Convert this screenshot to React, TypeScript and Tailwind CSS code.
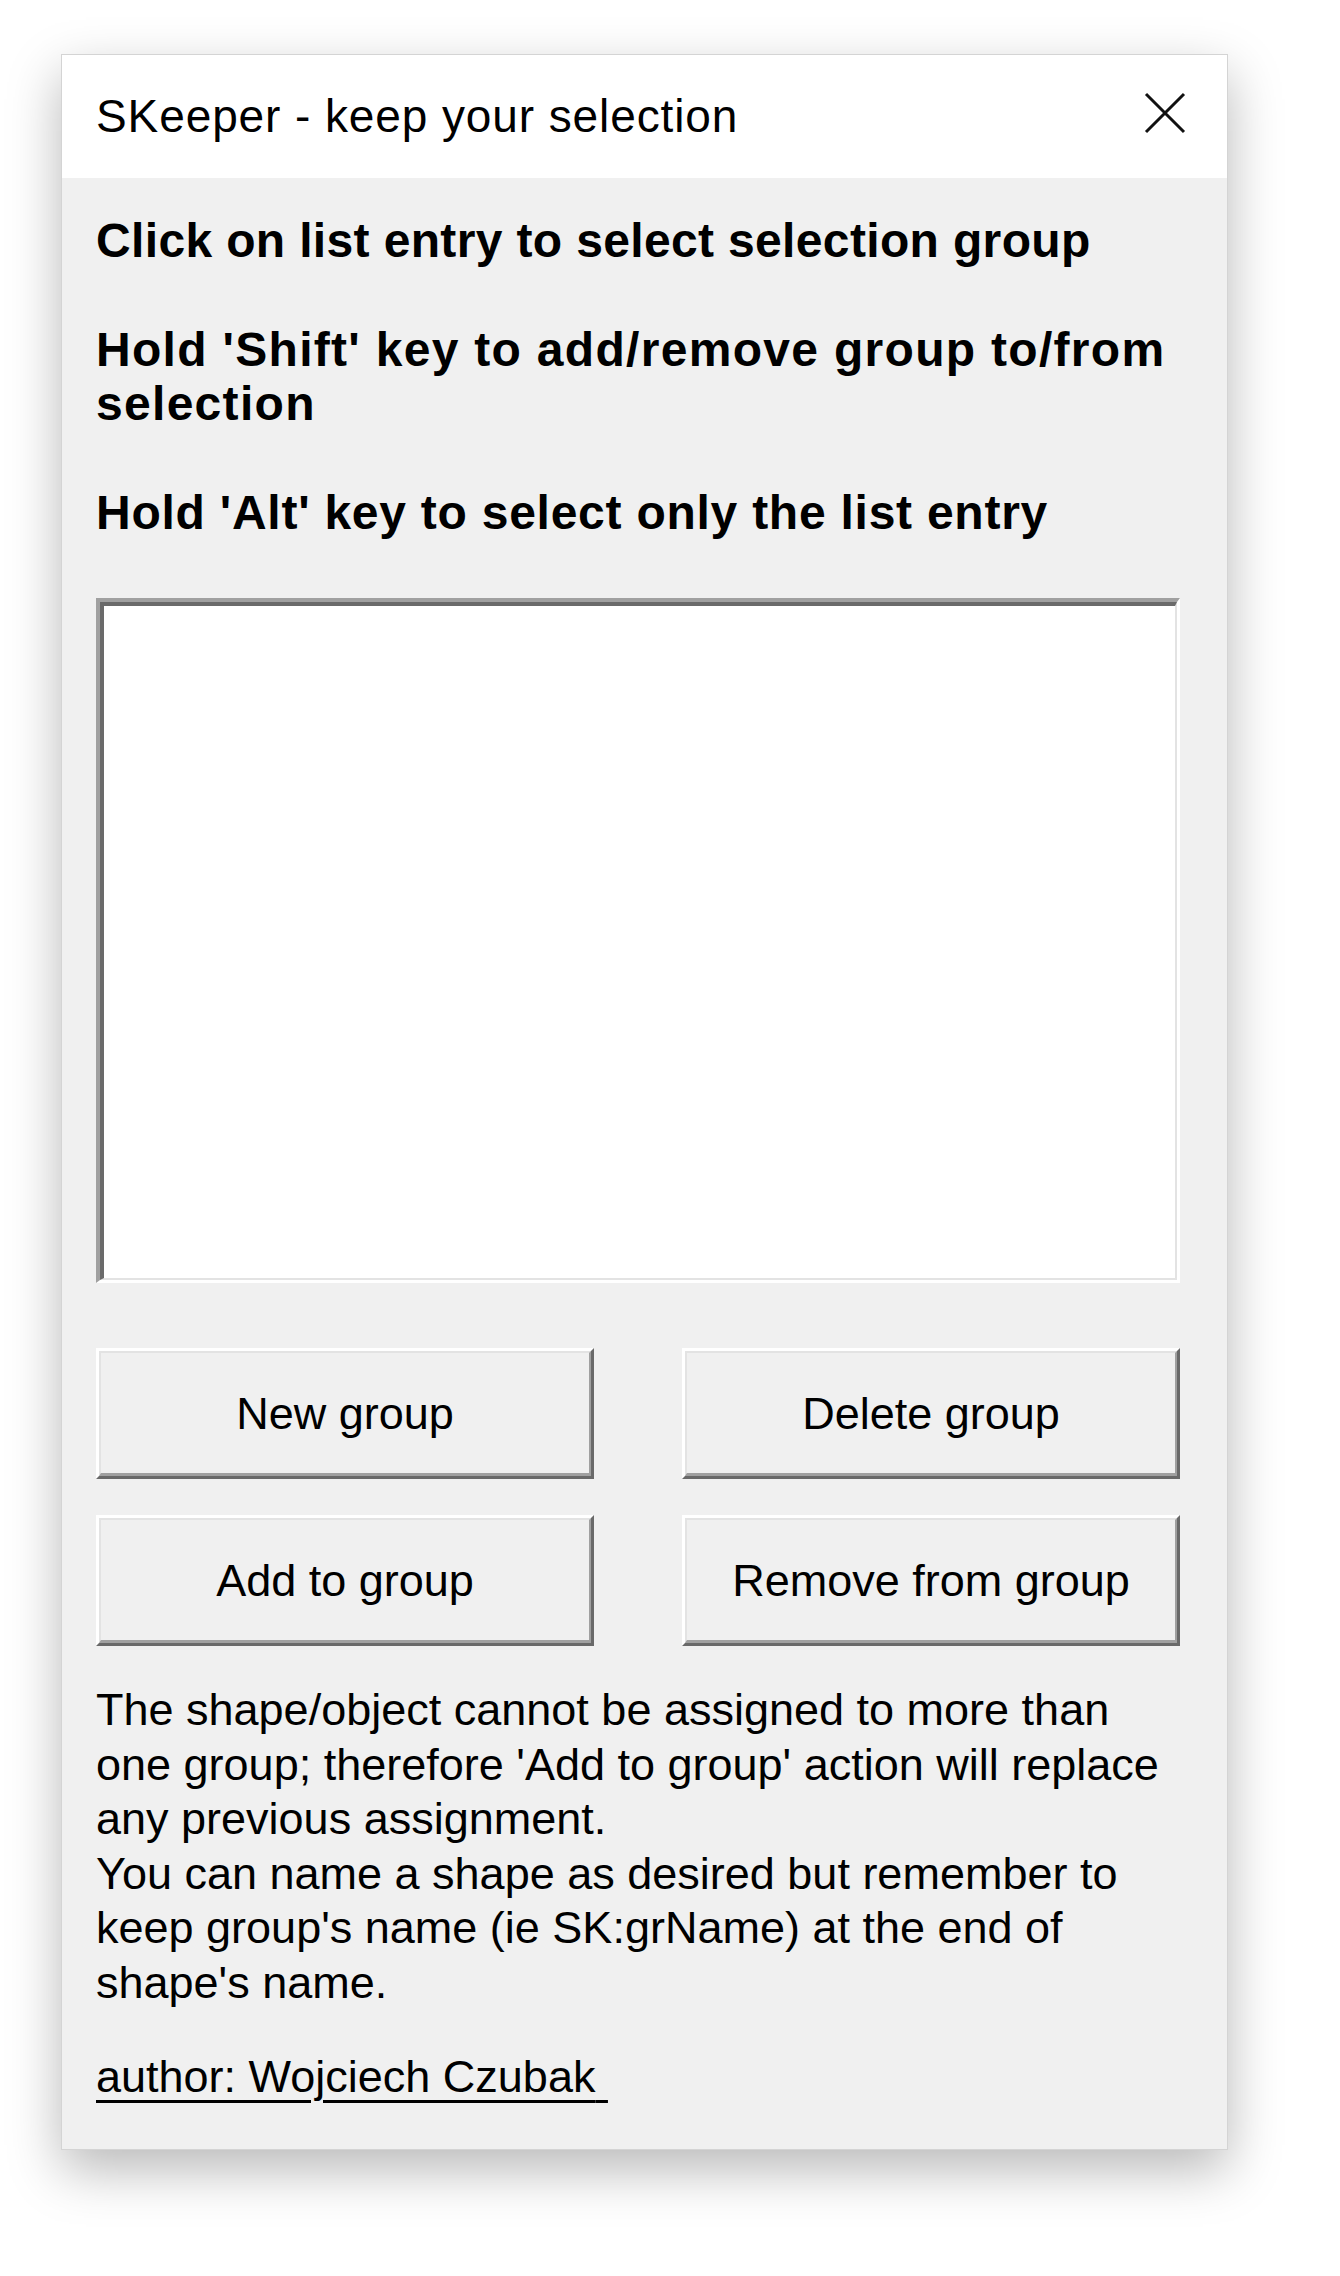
const CloseIcon = () => (
  <svg width="42" height="42" viewBox="0 0 42 42" fill="none" className="mb-[8px]">
    <path d="M2 2L40 40M40 2L2 40" stroke="#111" strokeWidth="3" />
  </svg>
);

function RaisedButton({ label }: { label: string }) {
  return (
    <button className="h-[131px] border-t-[3px] border-l-[3px] border-b-[3px] border-r-[3px] border-t-white border-l-white border-b-[#696969] border-r-[#696969] bg-[#f0f0f0]">
      <div className="flex h-full items-center justify-center border-t-[2px] border-l-[2px] border-b-[3px] border-r-[2px] border-t-[#e3e3e3] border-l-[#e3e3e3] border-b-[#a0a0a0] border-r-[#a0a0a0] text-[45px] leading-none">
        {label}
      </div>
    </button>
  );
}

export default function App() {
  return (
    <div className="min-h-[2276px] w-full bg-white pl-[61px] pt-[54px] font-['Liberation_Sans',Arial,sans-serif] text-black">
      <div className="w-[1167px] border border-[#d4d4d4] bg-[#f0f0f0] shadow-[0_20px_50px_rgba(0,0,0,0.28)]">
        {/* Title bar */}
        <div className="flex h-[123px] items-center justify-between bg-white pl-[34px] pr-[41px]">
          <span className="text-[46px] tracking-[0.9px]">
            SKeeper - keep your selection
          </span>
          <CloseIcon />
        </div>

        <div className="pb-[45px] pl-[34px] pr-[47px] pt-[36px]">
          {/* Hints */}
          <div className="flex flex-col gap-[55px] text-[48px] font-bold leading-[54px]">
            <p className="whitespace-nowrap tracking-[0.35px]">
              Click on list entry to select selection group
            </p>
            <p className="whitespace-nowrap tracking-[1.3px]">
              Hold 'Shift' key to add/remove group to/from
              <br />
              selection
            </p>
            <p className="whitespace-nowrap tracking-[0.75px]">
              Hold 'Alt' key to select only the list entry
            </p>
          </div>

          {/* List box */}
          <div className="mt-[58px] h-[685px] border-t-[4px] border-l-[4px] border-b-[3px] border-r-[3px] border-t-[#a0a0a0] border-l-[#a0a0a0] border-b-white border-r-white">
            <div className="h-full border-t-[4px] border-l-[4px] border-b-[2px] border-r-[2px] border-t-[#6a6a6a] border-l-[#6a6a6a] border-b-[#e3e3e3] border-r-[#e3e3e3] bg-white" />
          </div>

          {/* Buttons */}
          <div className="mt-[65px] grid grid-cols-2 gap-x-[88px] gap-y-[36px]">
            <RaisedButton label="New group" />
            <RaisedButton label="Delete group" />
            <RaisedButton label="Add to group" />
            <RaisedButton label="Remove from group" />
          </div>

          {/* Notes */}
          <p className="mt-[37px] whitespace-nowrap text-[45px] leading-[54.5px]">
            The shape/object cannot be assigned to more than
            <br />
            one group; therefore 'Add to group' action will replace
            <br />
            any previous assignment.
            <br />
            You can name a shape as desired but remember to
            <br />
            keep group's name (ie SK:grName) at the end of
            <br />
            shape's name.
          </p>

          <p className="mt-[40px] whitespace-pre text-[45px] leading-[54px] underline decoration-[3px] underline-offset-[8px]">
            author: Wojciech Czubak{" "}
          </p>
        </div>
      </div>
    </div>
  );
}
